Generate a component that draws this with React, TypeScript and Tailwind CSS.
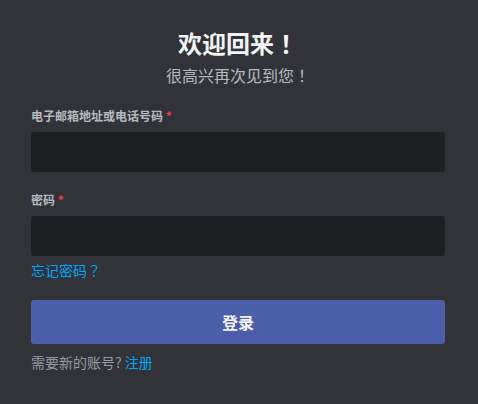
import React from 'react';

// full-width punctuation centred in its cell, like the reference
function Punct({ children }: { children: React.ReactNode }) {
  return <span className="font-['Noto_Sans_CJK_JP',sans-serif]">{children}</span>;
}

export default function App() {
  return (
    <div className="h-[404px] w-[478px] bg-[#313338] pl-[31px] pr-[33px] pt-[28px] font-['Noto_Sans_CJK_SC','Noto_Sans',sans-serif]">
      {/* Header */}
      <div className="text-center">
        <h1 className="text-[24px] font-bold leading-[30px] text-[#f2f3f5]">
          欢迎回来<Punct>！</Punct>
        </h1>
        <p className="mt-[7px] text-[16px] leading-[20px] text-[#b5bac1]">
          很高兴再次见到您<Punct>！</Punct>
        </p>
      </div>

      {/* Email */}
      <div className="mt-[23px]">
        <label className="block text-[12px] font-bold leading-[16px] text-[#b5bac1]">
          电子邮箱地址或电话号码 <span className="text-[#f23f43]">*</span>
        </label>
        <input className="mt-[8px] block h-[40px] w-full rounded-[3px] bg-[#1e1f22] px-[10px] text-[16px] text-[#dbdee1] outline-none" />
      </div>

      {/* Password */}
      <div className="mt-[20px]">
        <label className="block text-[12px] font-bold leading-[16px] text-[#b5bac1]">
          密码 <span className="text-[#f23f43]">*</span>
        </label>
        <input type="password" className="mt-[8px] block h-[40px] w-full rounded-[3px] bg-[#1e1f22] px-[10px] text-[16px] text-[#dbdee1] outline-none" />
        <a className="mt-[4px] block text-[14px] leading-[20px] text-[#00a8fc]">
          忘记密码<Punct>？</Punct>
        </a>
      </div>

      <button className="mt-[20px] h-[44px] w-full rounded-[3px] bg-[#4b5eaa] text-[16px] font-bold text-[#f2f3f5]">
        登录
      </button>

      <div className="mt-[10px] text-[14px] leading-[16px] text-[#949ba4]">
        需要新的账号? <a className="text-[#00a8fc]">注册</a>
      </div>
    </div>
  );
}
